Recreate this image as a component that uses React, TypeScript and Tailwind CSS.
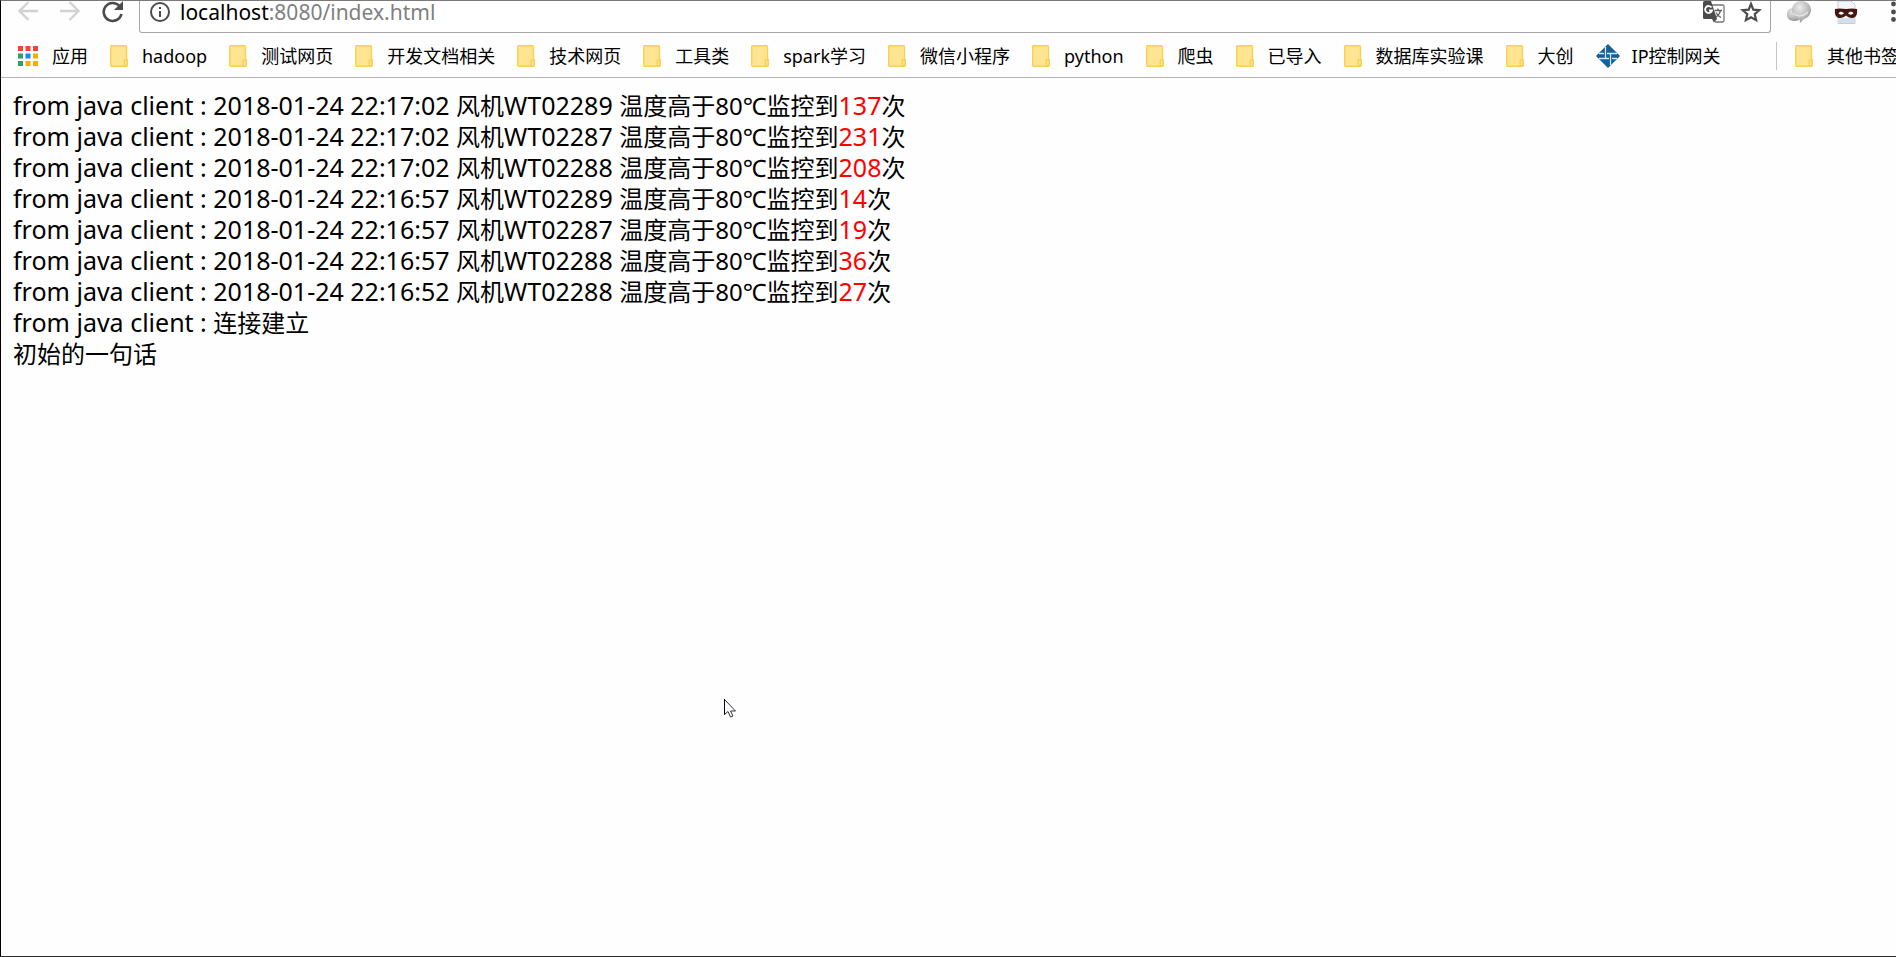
import React from "react";

type Bookmark = {
    name: string;
    icon?: "folder" | "gateway";
};

type Message = {
    time: string;
    fan: string;
    count: number;
};

const bookmarks: Bookmark[] = [
    { name: "hadoop" },
    { name: "测试网页" },
    { name: "开发文档相关" },
    { name: "技术网页" },
    { name: "工具类" },
    { name: "spark学习" },
    { name: "微信小程序" },
    { name: "python" },
    { name: "爬虫" },
    { name: "已导入" },
    { name: "数据库实验课" },
    { name: "大创" },
    { name: "IP控制网关", icon: "gateway" },
];

const messages: Message[] = [
    { time: "2018-01-24 22:17:02", fan: "WT02289", count: 137 },
    { time: "2018-01-24 22:17:02", fan: "WT02287", count: 231 },
    { time: "2018-01-24 22:17:02", fan: "WT02288", count: 208 },
    { time: "2018-01-24 22:16:57", fan: "WT02289", count: 14 },
    { time: "2018-01-24 22:16:57", fan: "WT02287", count: 19 },
    { time: "2018-01-24 22:16:57", fan: "WT02288", count: 36 },
    { time: "2018-01-24 22:16:52", fan: "WT02288", count: 27 },
];

const appColors = [
    "#f44336", "#f44336", "#f44336",
    "#34a060", "#1e88f5", "#f9ab00",
    "#34a060", "#f9ab00", "#f9ab00",
];

function ArrowIcon({ flip }: { flip?: boolean }) {
    return (
        <svg width="20" height="20" viewBox="0 0 20 20" fill="none" stroke="#d2d2d2" strokeWidth="2.4" className={flip ? "-scale-x-100" : ""}>
            <path d="M20 10H2M10.5 1L1.500 10l9 9" />
        </svg>
    );
}

function ReloadIcon() {
    return (
        <svg width="22" height="22" viewBox="0 0 22 22" fill="none">
            <path d="M17.5 5A9 9 0 1 0 19.500 13" stroke="#4c4c4c" strokeWidth="2.6" />
            <path d="M21 0v9h-9z" fill="#4c4c4c" />
        </svg>
    );
}

function InfoIcon() {
    return (
        <svg width="20" height="20" viewBox="0 0 20 20" fill="none" stroke="#4c4c4c">
            <circle cx="10" cy="10" r="9" strokeWidth="2" />
            <path d="M10 9v6M10 5v2" strokeWidth="2" />
        </svg>
    );
}

function TranslateIcon() {
    return (
        <svg width="22" height="22" viewBox="0 0 22 22" fill="none">
            <path d="M9 4h10.500a1.500 1.500 0 0 1 1.500 1.500v14a1.500 1.500 0 0 1-1.500 1.500H12" stroke="#757575" strokeWidth="1.3" />
            <path d="M1.500 0H8l6 18H1.500A1.500 1.500 0 0 1 0 16.500v-15A1.500 1.500 0 0 1 1.500 0z" fill="#4c4c4c" />
            <path d="M9 18h5l-3 3.500z" fill="#4c4c4c" />
            <path d="M8.500 6.500A3.500 3.500 0 1 0 9 9.500H6" stroke="#fff" strokeWidth="1.8" />
            <path d="M11.500 9.500H19M15 7.500v2M17.500 9.500c-.5 3-2.500 5-4.500 6.500M13 11.500c1 2 2.500 4 5 5" stroke="#5f5f5f" strokeWidth="1.3" />
        </svg>
    );
}

function StarIcon() {
    return (
        <svg width="22" height="22" viewBox="0 0 22 22" fill="none" stroke="#4c4c4c" strokeWidth="2.2">
            <path d="M11 3l2.300 5.600 6 .5-4.600 4 1.400 6L11 16.200l-5.100 2.900 1.400-6-4.600-4 6-.5z" />
        </svg>
    );
}

function BubbleIcon() {
    return (
        <svg width="24" height="24" viewBox="0 0 24 24">
            <defs>
                <radialGradient id="bubble" cx="0.4" cy="0.3" r="0.8">
                    <stop offset="0" stopColor="#ececec" />
                    <stop offset="0.6" stopColor="#b9b9b9" />
                    <stop offset="1" stopColor="#858585" />
                </radialGradient>
            </defs>
            <path d="M7 7c4 0 8 2 8 6.500 0 3.500-3 6.500-7 6.500-5 0-8-2-8-6.500S3 7 7 7z" fill="url(#bubble)" />
            <path d="M14 0c6 0 10 4 10 9 0 4-3 8-7 9l-4 4-.5-4C8 17 5 13 5 9c0-5 4-9 9-9z" fill="url(#bubble)" />
            <path d="M6 12c4 4 10 4 15-1" fill="none" stroke="#e4e4e4" strokeWidth="1.5" />
        </svg>
    );
}

function MaskIcon() {
    return (
        <svg width="24" height="24" viewBox="0 0 24 24">
            <path d="M4 0h13l4 4v18.500H4z" fill="#f4f6f9" stroke="#c9ced6" />
            <path d="M4 17h17v5H4z" fill="#d3dfec" />
            <path d="M1 8c4-1 7-.5 11 0 4-.5 7-1 11 0 .5 4 0 8-4 9-3 .5-5-1-7-2.500-2 1.500-4 3-7 2.500-4-1-4.500-5-4-9z" fill="#45150f" />
            <path d="M4.500 12.500c1-2.500 4-2.500 5.500 0-1.500 1.500-4 1.500-5.500 0zM14 12.500c1.500-2.500 4.500-2.500 5.500 0-1.500 1.500-4 1.500-5.500 0z" fill="#fff" />
        </svg>
    );
}

function MenuIcon() {
    return (
        <svg width="5" height="22" viewBox="0 0 5 22" fill="#4c4c4c">
            <circle cx="2.500" cy="3" r="2.400" />
            <circle cx="2.500" cy="11" r="2.400" />
            <circle cx="2.500" cy="18.500" r="2.400" />
        </svg>
    );
}

function AppsIcon() {
    return (
        <svg width="20" height="20" viewBox="0 0 20 20" className="shrink-0">
            {appColors.map((color, i) => (
                <rect key={i} x={(i % 3) * 7.5} y={Math.floor(i / 3) * 7.5} width="5" height="5" fill={color} />
            ))}
        </svg>
    );
}

function FolderIcon() {
    return (
        <svg width="18" height="22" viewBox="0 0 18 22" fill="#ffe592" stroke="#f9cf54" strokeWidth="1.4" className="shrink-0">
            <path d="M1.500.7h14q1 0 1 1V14.700h.8v5.600q0 1-1 1H1.500q-.8 0-.8-1V1.700q0-1 .8-1z" />
            <rect x="14.200" y="14.700" width="3" height="6" rx="1" />
        </svg>
    );
}

function GatewayIcon() {
    return (
        <svg width="24" height="24" viewBox="0 0 24 24" className="shrink-0">
            <path d="M12 0l12 12-12 12L0 12z" fill="#12609a" />
            <path d="M9.500 3v12M14.500 9v12M3 9.500h5M11 9.500h10M3 14.500h10M16 14.500h5" stroke="#d6e6f2" strokeWidth="1.3" />
        </svg>
    );
}

function CursorIcon() {
    return (
        <svg width="12" height="19" viewBox="0 0 12 19" fill="#fff">
            <path d="M.5.5v15l3.500-3 2.500 5.500 2.500-1-2.500-5h5z" stroke="#333" strokeWidth="1" />
            <path d="M.5 0v15.500" stroke="#000033" />
        </svg>
    );
}

function Toolbar() {
    return (
        <div className="flex h-8 items-start pl-[17px]">
            <button type="button" aria-label="Back">
                <ArrowIcon />
            </button>
            <button type="button" aria-label="Forward" className="ml-[22px]">
                <ArrowIcon flip />
            </button>
            <button type="button" aria-label="Reload" className="ml-[22px]">
                <ReloadIcon />
            </button>
            <div className="ml-[15px] flex h-8 flex-1 items-start rounded-b-[3px] border-x border-b border-[#a6a6a6] bg-white pl-2.5">
                <span className="mt-px">
                    <InfoIcon />
                </span>
                <div className="ml-2.5 flex-1 text-[21px] leading-[22px] text-[#808080]">
                    <span className="text-black">localhost</span>:8080/index.html
                </div>
                <button type="button" aria-label="Translate" className="mr-[15px]">
                    <TranslateIcon />
                </button>
                <button type="button" aria-label="Bookmark this page" className="mr-2">
                    <StarIcon />
                </button>
            </div>
            <button type="button" aria-label="Messages" className="ml-4">
                <BubbleIcon />
            </button>
            <button type="button" aria-label="Incognito" className="ml-[23px]">
                <MaskIcon />
            </button>
            <button type="button" aria-label="Menu" className="ml-[33px]">
                <MenuIcon />
            </button>
        </div>
    );
}

function BookmarkBar() {
    return (
        <nav className="flex h-[45px] items-center overflow-hidden border-b border-[#b6b6b6] pt-0.5 pl-[17px] text-lg whitespace-nowrap">
            <a href="#" className="mr-[22px] flex shrink-0 items-center gap-3.5">
                <AppsIcon />
                应用
            </a>
            {bookmarks.map((item) =>
                item.icon === "gateway" ? (
                    <a key={item.name} href="#" className="flex shrink-0 items-center gap-3">
                        <GatewayIcon />
                        {item.name}
                    </a>
                ) : (
                    <a key={item.name} href="#" className="mr-[22px] flex shrink-0 items-center gap-3.5">
                        <FolderIcon />
                        {item.name}
                    </a>
                )
            )}
            <a href="#" className="ml-auto flex w-[120px] shrink-0 items-center gap-3.5 border-l border-[#c4c4c4] pl-[18px]">
                <FolderIcon />
                其他书签
            </a>
        </nav>
    );
}

export default function App() {
    return (
        <div className="relative flex min-h-screen flex-col border-y border-l border-t-[#7d797a] border-b-[#2c2c2c] border-l-black bg-[#fefefe] font-['Noto_Sans','Noto_Sans_CJK_SC',sans-serif] text-black">
            <Toolbar />
            <BookmarkBar />
            <main className="px-3 py-3 text-2xl leading-[31px]">
                {messages.map((msg, i) => (
                    <p key={i} className="h-[31px]">
                        <span className="text-[25px]">from java client : {msg.time} </span>
                        风机<span className="text-[25px]">{msg.fan} </span>
                        温度高于80℃监控到
                        <span className="text-[25px] text-[#ff0000]">{msg.count}</span>次
                    </p>
                ))}
                <p className="h-[31px]">
                    <span className="text-[25px]">from java client : </span>连接建立
                </p>
                <p className="h-[31px]">初始的一句话</p>
            </main>
            <div className="pointer-events-none absolute top-[698px] left-[723px]">
                <CursorIcon />
            </div>
        </div>
    );
}
